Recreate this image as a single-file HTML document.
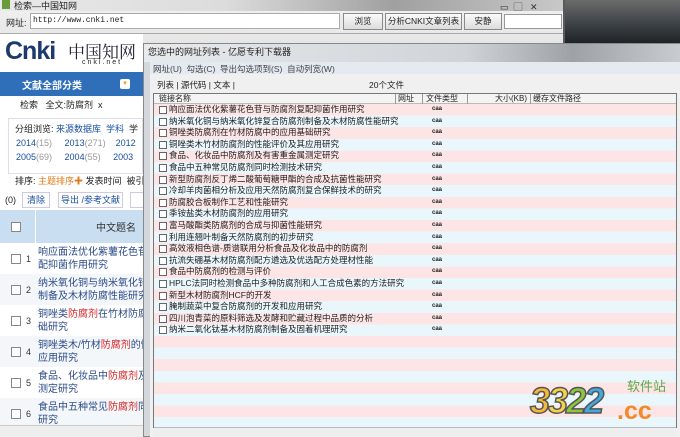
<!DOCTYPE html>
<html><head><meta charset="utf-8"><style>
*{margin:0;padding:0;box-sizing:border-box}
body{width:680px;height:437px;overflow:hidden;position:relative;background:#e9ecef;font-family:"Liberation Sans","Noto Sans CJK SC",sans-serif;font-size:9px;color:#222}
.a{position:absolute;white-space:nowrap}
.btn{position:absolute;height:17px;top:13px;background:linear-gradient(#fafafa,#dcdcdc);border:1px solid #8a8a8a;font-size:8.5px;text-align:center;line-height:15px;white-space:nowrap;overflow:hidden}
.row{position:absolute;left:150px;width:530px;height:11.6px;font-size:8.5px;line-height:11.6px;white-space:nowrap}
.row .cb{position:absolute;left:9px;top:2px;width:8px;height:8px;border:1px solid #666;background:#fff}
.row .t{position:absolute;left:19px}
.row .c{position:absolute;left:282px;font-size:6px;font-weight:bold}
.lr{position:absolute;left:0;width:143px;height:31px;font-size:10px;color:#2b4b8a;line-height:13px;overflow:hidden;white-space:nowrap}
.lr .cb{position:absolute;left:11px;top:11px;width:10px;height:10px;border:1px solid #888;background:#fff}
.lr .n{position:absolute;left:26px;top:10px;color:#333;font-size:9px}
.lr .t{position:absolute;left:38px;top:3px;white-space:nowrap}
.red{color:#d22}
</style></head><body>
<div class="a" style="left:400px;top:0;width:280px;height:43px;background:linear-gradient(90deg,#d8d8d8,#9a9a9a 40%,#555 60%,#2e2e2e 80%,#777)"></div>
<div class="a" style="left:565px;top:0;width:115px;height:43px;background:linear-gradient(180deg,#6b6b6b,#3a3f44 60%,#1f2326)"></div>
<div class="a" style="left:0;top:0;width:563px;height:43px;background:linear-gradient(#f2f2f2,#e6e6e6)"></div>
<div class="a" style="left:0;top:0;width:563px;height:11px;background:linear-gradient(90deg,#e9e9e9,#dcdcdc 40%,#a0a0a0 70%,#c8c8c8)"></div>
<div class="a" style="left:2px;top:0;width:8px;height:9px;background:#6a9b3a"></div>
<div class="a" style="left:14px;top:-1px;font-size:9px">检索—中国知网</div>
<div class="a" style="left:500px;top:0;font-size:9px;color:#333">▭ &nbsp;▢ &nbsp; ✕</div>
<div class="a" style="left:6px;top:16px;font-size:9px">网址:</div>
<div class="a" style="left:30px;top:13px;width:310px;height:16px;background:#fff;border:1px solid #aaa;font-family:'Liberation Mono',monospace;font-size:8px;line-height:14px;padding-left:2px">http://www.cnki.net</div>
<div class="btn" style="left:343px;width:40px">浏览</div>
<div class="btn" style="left:385px;width:77px">分析CNKI文章列表</div>
<div class="btn" style="left:464px;width:38px">安静</div>
<div class="a" style="left:504px;top:14px;width:58px;height:15px;background:#fff;border:1px solid #999"></div>
<div class="a" style="left:0;top:33px;width:563px;height:1px;background:#aaa"></div>
<div class="a" style="left:0;top:34px;width:143px;height:403px;background:#fff"></div>
<div class="a" style="left:5px;top:37px;font-size:25px;font-weight:bold;color:#1d3a6c;letter-spacing:-1px">Cnki</div>
<div class="a" style="left:68px;top:38px;font-size:17px;color:#223;font-family:'Noto Serif CJK SC',serif">中国知网</div>
<div class="a" style="left:82px;top:59px;font-size:7px;letter-spacing:2px">cnki.net</div>
<div class="a" style="left:0;top:72px;width:143px;height:24px;background:#2f6fba"></div>
<div class="a" style="left:22px;top:77px;font-size:10px;color:#fff;font-weight:bold">文献全部分类</div>
<div class="a" style="left:120px;top:79px;width:10px;height:10px;background:#fff;border-radius:2px;color:#e90;font-size:7px;text-align:center;line-height:10px">▾</div>
<div class="a" style="left:20px;top:98px;font-size:9px">检索 &nbsp; 全文:防腐剂 &nbsp;x</div>
<div class="a" style="left:8px;top:118px;width:135px;height:56px;border:1px solid #dde"></div>
<div class="a" style="left:15px;top:122px;font-size:9px">分组浏览: <span style="color:#1a4fa0">来源数据库 &nbsp;学科</span> &nbsp;学</div>
<div class="a" style="left:16px;top:138px;font-size:9px;color:#1a4fa0">2014<span style="color:#999">(15)</span> &nbsp; &nbsp; 2013<span style="color:#999">(271)</span> &nbsp; &nbsp;2012</div>
<div class="a" style="left:16px;top:152px;font-size:9px;color:#1a4fa0">2005<span style="color:#999">(69)</span> &nbsp; &nbsp; 2004<span style="color:#999">(55)</span> &nbsp; &nbsp; 2003</div>
<div class="a" style="left:15px;top:174px;font-size:9px">排序: <span style="color:#e07a1a">主题排序✚</span> 发表时间 &nbsp;被引</div>
<div class="a" style="left:5px;top:195px;font-size:9px">(0)</div>
<div class="a" style="left:22px;top:192px;width:28px;height:16px;border:1px solid #ccd;font-size:9px;color:#1a4fa0;text-align:center;line-height:14px">清除</div>
<div class="a" style="left:58px;top:192px;width:65px;height:16px;border:1px solid #ccd;font-size:9px;color:#1a4fa0;text-align:center;line-height:14px">导出 /参考文献</div>
<div class="a" style="left:130px;top:192px;width:15px;height:16px;border:1px solid #ccd"></div>
<div class="a" style="left:0;top:210px;width:143px;height:33px;background:#c9def0"></div>
<div class="a" style="left:11px;top:222px;width:10px;height:10px;border:1px solid #888;background:#fff"></div>
<div class="a" style="left:35px;top:210px;width:1px;height:33px;background:#fff"></div>
<div class="a" style="left:96px;top:219px;font-size:10px;color:#333">中文题名</div>
<div class="lr" style="top:243px"><div class="cb"></div><div class="n">1</div><div class="t">响应面法优化紫薯花色苷<br>配抑菌作用研究</div></div>
<div class="lr" style="top:274px;background:#f4f7fa"><div class="cb"></div><div class="n">2</div><div class="t">纳米氧化铜与纳米氧化锌<br>制备及木材防腐性能研究</div></div>
<div class="lr" style="top:305px"><div class="cb"></div><div class="n">3</div><div class="t">铜唑类<span class="red">防腐剂</span>在竹材防腐<br>础研究</div></div>
<div class="lr" style="top:336px;background:#f4f7fa"><div class="cb"></div><div class="n">4</div><div class="t">铜唑类木/竹材<span class="red">防腐剂</span>的性<br>应用研究</div></div>
<div class="lr" style="top:367px"><div class="cb"></div><div class="n">5</div><div class="t">食品、化妆品中<span class="red">防腐剂</span>及<br>测定研究</div></div>
<div class="lr" style="top:398px;background:#f4f7fa"><div class="cb"></div><div class="n">6</div><div class="t">食品中五种常见<span class="red">防腐剂</span>同<br>研究</div></div>
<div class="a" style="left:0;top:425px;width:143px;height:12px;background:#eee;border-top:1px solid #ccc"></div>
<div class="a" style="left:143px;top:43px;width:537px;height:394px;background:#d4d8dc;border:1px solid #888"></div>
<div class="a" style="left:144px;top:44px;width:536px;height:18px;background:linear-gradient(90deg,#e8eaec,#d0d4d8 60%,#9ea2a6 80%,#c8ccd0)"></div>
<div class="a" style="left:148px;top:45px;font-size:9px">您选中的网址列表 - 亿愿专利下载器</div>
<div class="a" style="left:150px;top:62px;width:530px;height:12px;background:#e4eaf2"></div>
<div class="a" style="left:153px;top:63px;font-size:8.5px;color:#444">网址(U) &nbsp;勾选(C) &nbsp;导出勾选项到(S) &nbsp;自动列宽(W)</div>
<div class="a" style="left:150px;top:74px;width:530px;height:363px;background:#f0f0f0"></div>
<div class="a" style="left:157px;top:79px;font-size:8.5px">列表 | 源代码 | 文本 |</div>
<div class="a" style="left:369px;top:79px;font-size:8.5px">20个文件</div>
<div class="a" style="left:153px;top:93px;width:524px;height:335px;background:#fff;border:1px solid #777"></div>
<div class="a" style="left:154px;top:94px;width:522px;height:10px;background:#f4f4f4;border-bottom:1px solid #bbb;font-size:8px;line-height:10px">
<span class="a" style="left:5px">链接名称</span><span class="a" style="left:241px;border-left:1px solid #999;padding-left:2px">网址</span><span class="a" style="left:268px;border-left:1px solid #999;padding-left:3px">文件类型</span><span class="a" style="left:313px;border-left:1px solid #999;width:62px;text-align:right;padding-right:2px">大小(KB)</span><span class="a" style="left:376px;border-left:1px solid #999;padding-left:2px">缓存文件路径</span></div>
<div class="a" style="left:154px;top:104px;width:522px;height:323px;background:repeating-linear-gradient(#fde5e5 0,#fde5e5 11.6px,#e9f7fd 11.6px,#e9f7fd 23.2px)"></div>
<div class="row" style="top:104px"><div class="cb"></div><div class="t">响应面法优化紫薯花色苷与防腐剂复配抑菌作用研究</div><div class="c">caa</div></div>
<div class="row" style="top:115.6px"><div class="cb"></div><div class="t">纳米氧化铜与纳米氧化锌复合防腐剂制备及木材防腐性能研究</div><div class="c">caa</div></div>
<div class="row" style="top:127.2px"><div class="cb"></div><div class="t">铜唑类防腐剂在竹材防腐中的应用基础研究</div><div class="c">caa</div></div>
<div class="row" style="top:138.8px"><div class="cb"></div><div class="t">铜唑类木竹材防腐剂的性能评价及其应用研究</div><div class="c">caa</div></div>
<div class="row" style="top:150.4px"><div class="cb"></div><div class="t">食品、化妆品中防腐剂及有害重金属测定研究</div><div class="c">caa</div></div>
<div class="row" style="top:162px"><div class="cb"></div><div class="t">食品中五种常见防腐剂同时检测技术研究</div><div class="c">caa</div></div>
<div class="row" style="top:173.6px"><div class="cb"></div><div class="t">新型防腐剂反丁烯二酸葡萄糖甲酯的合成及抗菌性能研究</div><div class="c">caa</div></div>
<div class="row" style="top:185.2px"><div class="cb"></div><div class="t">冷却羊肉菌相分析及应用天然防腐剂复合保鲜技术的研究</div><div class="c">caa</div></div>
<div class="row" style="top:196.8px"><div class="cb"></div><div class="t">防腐胶合板制作工艺和性能研究</div><div class="c">caa</div></div>
<div class="row" style="top:208.4px"><div class="cb"></div><div class="t">季铵盐类木材防腐剂的应用研究</div><div class="c">caa</div></div>
<div class="row" style="top:220px"><div class="cb"></div><div class="t">富马酸酯类防腐剂的合成与抑菌性能研究</div><div class="c">caa</div></div>
<div class="row" style="top:231.6px"><div class="cb"></div><div class="t">利用连翘叶制备天然防腐剂的初步研究</div><div class="c">caa</div></div>
<div class="row" style="top:243.2px"><div class="cb"></div><div class="t">高效液相色谱-质谱联用分析食品及化妆品中的防腐剂</div><div class="c">caa</div></div>
<div class="row" style="top:254.8px"><div class="cb"></div><div class="t">抗流失硼基木材防腐剂配方遴选及优选配方处理材性能</div><div class="c">caa</div></div>
<div class="row" style="top:266.4px"><div class="cb"></div><div class="t">食品中防腐剂的检测与评价</div><div class="c">caa</div></div>
<div class="row" style="top:278px"><div class="cb"></div><div class="t">HPLC法同时检测食品中多种防腐剂和人工合成色素的方法研究</div><div class="c">caa</div></div>
<div class="row" style="top:289.6px"><div class="cb"></div><div class="t">新型木材防腐剂HCF的开发</div><div class="c">caa</div></div>
<div class="row" style="top:301.2px"><div class="cb"></div><div class="t">腌制蔬菜中复合防腐剂的开发和应用研究</div><div class="c">caa</div></div>
<div class="row" style="top:312.8px"><div class="cb"></div><div class="t">四川泡青菜的原料筛选及发酵和贮藏过程中品质的分析</div><div class="c">caa</div></div>
<div class="row" style="top:324.4px"><div class="cb"></div><div class="t">纳米二氧化钛基木材防腐剂制备及固着机理研究</div><div class="c">caa</div></div>
<div class="a" style="left:154px;top:427px;width:522px;height:10px;background:#eee;border-top:1px solid #bbb"></div>
<div class="a" style="left:530px;top:380px;font-size:36px;font-weight:bold;font-style:italic;letter-spacing:-2px;color:#f5b93a;-webkit-text-stroke:1.5px #555">3<span style="color:#f6d24a">3</span><span style="color:#8cc63f">2</span><span style="color:#3fa9e0">2</span></div>
<div class="a" style="left:617px;top:397px;font-size:25px;font-weight:bold;color:#f08a2a">.cc</div>
<div class="a" style="left:627px;top:376px;font-size:13px;color:#5aa84a">软件站</div>
</body></html>
